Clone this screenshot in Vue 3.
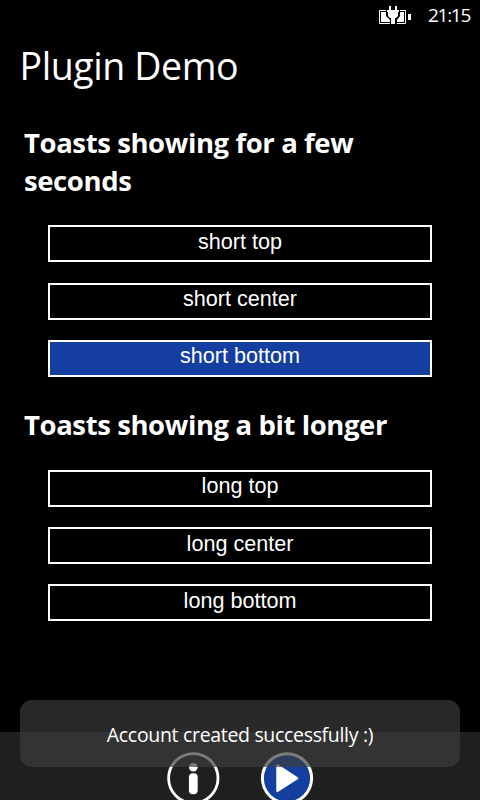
<script setup>
import { ref } from 'vue'

const active = ref('short bottom')
const shortToasts = ['short top', 'short center', 'short bottom']
const longToasts = ['long top', 'long center', 'long bottom']
</script>

<template>
  <div class="phone">
    <header class="status">
      <svg class="battery" width="34" height="20" viewBox="0 0 34 20">
        <path d="M.5 5.5h26v13H.5z" fill="none" stroke="#fff" />
        <path d="M2 7h23v10H2zM29 9h3v6h-3z" fill="#fff" />
        <path d="M7 5h14v6l-3 4v5h-7v-5l-4-4z" fill="#000" />
        <path d="M10 1h2v4h4V1h2v4h2v2h-1v4l-2 2h-1v6h-4v-6h-1l-2-2V7H8V5h2z" fill="#fff" />
      </svg>
      <span class="time">21:15</span>
    </header>
    <h1>Plugin Demo</h1>
    <main>
      <section>
        <h2>Toasts showing for a few<br />seconds</h2>
        <div class="buttons">
          <button v-for="label in shortToasts" :key="label" :class="{ active: active === label }" @click="active = label">{{ label }}</button>
        </div>
      </section>
      <section class="longer">
        <h2>Toasts showing a bit longer</h2>
        <div class="buttons">
          <button v-for="label in longToasts" :key="label" :class="{ active: active === label }" @click="active = label">{{ label }}</button>
        </div>
      </section>
    </main>
    <footer class="appbar">
      <svg width="54" height="54" viewBox="0 0 54 54">
        <circle cx="27.3" cy="27.3" r="24.7" fill="none" stroke="#fff" stroke-width="2.8" />
        <circle cx="27.3" cy="16.2" r="4.3" fill="#fff" />
        <rect x="22.9" y="22.2" width="8.8" height="21" rx="4" fill="#fff" />
      </svg>
      <svg width="54" height="54" viewBox="0 0 54 54">
        <circle cx="27" cy="27.3" r="24.6" fill="#143fa0" stroke="#fff" stroke-width="3" />
        <path d="M17.5 14.5 37 27.3 17.5 39.8z" fill="#fff" stroke="#fff" stroke-width="2.5" stroke-linejoin="round" />
      </svg>
    </footer>
    <div class="toast">Account created successfully :)</div>
  </div>
</template>

<style>
body { background: #000; }
</style>

<style scoped>
.phone {
  position: relative;
  display: flex;
  flex-direction: column;
  width: 480px;
  height: 800px;
  overflow: hidden;
  background: #000;
  color: #fff;
  font-family: "Open Sans", "Noto Sans", sans-serif;
}
.status {
  display: flex;
  justify-content: flex-end;
  height: 32px;
  padding: 5px 10px 0 0;
  box-sizing: border-box;
}
.battery { margin-right: 15px; }
.time { font-size: 19px; line-height: 20px; letter-spacing: -1.3px; }
h1 {
  margin: 0 0 0 19.5px;
  height: 68px;
  font-size: 37.5px;
  line-height: 68px;
  font-weight: 400;
  letter-spacing: -0.4px;
  white-space: nowrap;
}
main { height: 632px; padding: 24px 24px 0; box-sizing: border-box; }
h2 {
  margin: 0;
  font-size: 27.5px;
  line-height: 37.5px;
  font-weight: 700;
  letter-spacing: -0.4px;
  white-space: nowrap;
}
.buttons {
  display: grid;
  gap: 20.2px;
  padding: 26.4px 24px 0;
}
button {
  height: 37px;
  padding: 0 0 4px;
  box-sizing: border-box;
  border: 2px solid #fff;
  border-radius: 0;
  background: #000;
  color: #fff;
  font: 21.6px/28px "Liberation Sans", Arial, sans-serif;
}
.active { background: #143fa0; }
.longer { padding-top: 29.2px; }
.appbar {
  display: flex;
  justify-content: center;
  gap: 40px;
  height: 68px;
  padding-top: 19px;
  box-sizing: border-box;
  background: #1f1f1f;
}
.appbar svg { flex: none; }
.toast {
  position: absolute;
  left: 20px;
  top: 700px;
  width: 440px;
  height: 67px;
  border-radius: 12px;
  background: rgba(60, 60, 60, 0.68);
  font-size: 19.5px;
  line-height: 70px;
  letter-spacing: -0.32px;
  text-align: center;
  white-space: nowrap;
}
</style>
